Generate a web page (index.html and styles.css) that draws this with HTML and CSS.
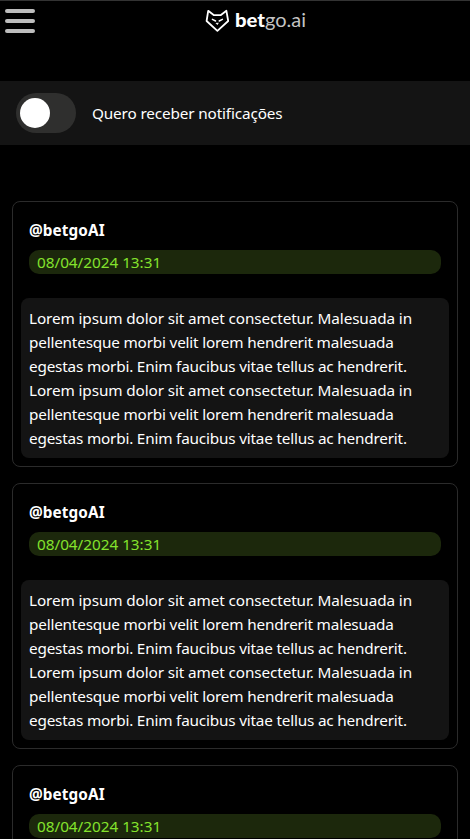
FILE: index.html
```html
<!DOCTYPE html>
<html lang="pt-BR">
<head>
<meta charset="utf-8">
<title>betgo.ai</title>
<link rel="stylesheet" href="styles.css">
</head>
<body>
<header class="topbar">
  <button class="menu" aria-label="Menu"><span></span><span></span><span></span></button>
  <div class="brand">
    <svg class="logo" viewBox="0 0 24 24" fill="none" stroke="#fff" stroke-width="1.8" stroke-linejoin="round" stroke-linecap="round">
      <path d="M3.2 1.8 9 6.2H15.6L21.4 1.8 23.2 12 12.4 21.8 1.6 12Z"/>
      <path d="M7.4 10.4 10.6 12M17.4 10.4 14.2 12" stroke-width="1.5"/>
      <path d="M11.5 14.3H13.3L12.4 15.2Z" fill="#fff" stroke-width="1"/>
    </svg>
    <svg class="wordmark" viewBox="0 0 74 24"><text x="0" y="17.5" textLength="30" lengthAdjust="spacingAndGlyphs" class="bold">bet</text><text x="30" y="17.5" textLength="41" lengthAdjust="spacingAndGlyphs" class="light">go.ai</text></svg>
  </div>
</header>
<section class="notify">
  <div class="switch"><div class="knob"></div></div>
  <span class="notify-label">Quero receber notificações</span>
</section>
<main class="feed">
  <article class="card">
    <div class="head"><div class="author">@betgoAI</div><div class="date">08/04/2024 13:31</div></div>
    <p class="message"><span class="wide">Lorem ipsum dolor sit amet consectetur. Malesuada in</span><br>pellentesque morbi velit lorem hendrerit malesuada<br>egestas morbi. Enim faucibus vitae tellus ac hendrerit.<br><span class="wide">Lorem ipsum dolor sit amet consectetur. Malesuada in</span><br>pellentesque morbi velit lorem hendrerit malesuada<br>egestas morbi. Enim faucibus vitae tellus ac hendrerit.</p>
  </article>
  <article class="card">
    <div class="head"><div class="author">@betgoAI</div><div class="date">08/04/2024 13:31</div></div>
    <p class="message"><span class="wide">Lorem ipsum dolor sit amet consectetur. Malesuada in</span><br>pellentesque morbi velit lorem hendrerit malesuada<br>egestas morbi. Enim faucibus vitae tellus ac hendrerit.<br><span class="wide">Lorem ipsum dolor sit amet consectetur. Malesuada in</span><br>pellentesque morbi velit lorem hendrerit malesuada<br>egestas morbi. Enim faucibus vitae tellus ac hendrerit.</p>
  </article>
  <article class="card">
    <div class="head"><div class="author">@betgoAI</div><div class="date">08/04/2024 13:31</div></div>
  </article>
</main>
</body>
</html>
```
FILE: styles.css
```css
* { box-sizing: border-box; }
html, body { height: 100%; }
body {
  margin: 0;
  overflow: hidden;
  background: #000;
  color: #fff;
  font: 15.3px/24px "Noto Sans", "Open Sans", sans-serif;
}
.topbar {
  display: flex;
  justify-content: space-between;
  height: 81px;
  padding-right: 161px;
  border-top: 1px solid #333;
}
.menu {
  display: flex;
  flex-direction: column;
  gap: 6px;
  width: 40px;
  height: 40px;
  padding: 8px 5px;
  border: 0;
  background: none;
}
.menu span { width: 30px; height: 4px; border-radius: 2px; background: #bdbdbd; }
.brand { display: flex; height: 24px; margin-top: 8px; }
.logo { width: 24px; height: 24px; }
.wordmark { width: 74px; height: 24px; margin-left: 6px; overflow: visible; fill: #fff; font-family: Lato, sans-serif; font-size: 19px; }
.bold { font-weight: 900; }
.light { font-weight: 400; fill: #c4c4c4; }
.notify {
  display: flex;
  align-items: center;
  gap: 16px;
  height: 64px;
  padding: 0 16px;
  background: #141414;
}
.notify-label { letter-spacing: -0.14px; }
.switch { width: 60px; height: 40px; padding: 5px 4px; border-radius: 20px; background: #2f2f2e; }
.knob { width: 30px; height: 30px; border-radius: 50%; background: #fff; }
.feed { display: flex; flex-direction: column; gap: 16px; height: 694px; padding: 56px 12px 0; overflow: hidden; }
.card { flex: none; height: 266px; padding: 8px; border: 1px solid #2b2b2b; border-radius: 8px; }
.head { padding: 8px 8px 24px; }
.author { margin-bottom: 8px; font-weight: 700; letter-spacing: 0.1px; }
.date { padding: 0 8px; border-radius: 10px; background: #1c280c; color: #84e32c; letter-spacing: -0.02px; }
.message { margin: 0; padding: 8px; border-radius: 8px; background: #141414; white-space: nowrap; letter-spacing: -0.19px; }
.wide { letter-spacing: -0.11px; }
```
